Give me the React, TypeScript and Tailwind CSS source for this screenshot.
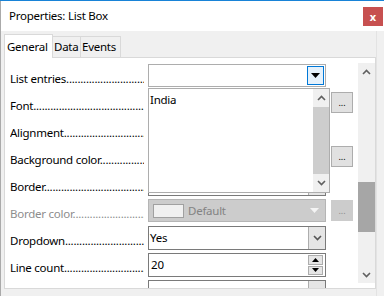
import type { ReactNode } from "react";

const font = { fontFamily: '"Noto Sans", "Open Sans", Arial, sans-serif' };

function Label({ text, disabled }: { text: string; disabled?: boolean }) {
  return (
    <div
      className={`w-[134px] overflow-hidden whitespace-nowrap pt-[7px] text-[11.5px] leading-[16px] tracking-[-0.25px] ${
        disabled ? "text-[#8d8d8d]" : "text-black"
      }`}
    >
      {text}
      {".".repeat(80)}
    </div>
  );
}

function Row({ label, disabled, children }: { label: string; disabled?: boolean; children: ReactNode }) {
  return (
    <div className="flex h-[27px] items-start pl-[5px]">
      <Label text={label} disabled={disabled} />
      <div className="ml-[4px] flex items-start gap-[5px]">{children}</div>
    </div>
  );
}

function DotsButton({ disabled }: { disabled?: boolean }) {
  return (
    <div
      className={`mt-[1px] flex h-[21px] w-[22px] items-end justify-center border pb-[5px] text-[9px] leading-none ${
        disabled ? "border-[#cccccc] bg-[#cccccc] text-[#8d8d8d]" : "border-[#adadad] bg-[#e1e1e1] text-black"
      }`}
    >
      ...
    </div>
  );
}

function Chevron({ up, color = "#444" }: { up?: boolean; color?: string }) {
  return (
    <svg width="9" height="6" viewBox="0 0 9 6">
      <path
        d={up ? "M1 5 L4.5 1.5 L8 5" : "M1 1 L4.5 4.5 L8 1"}
        fill="none"
        stroke={color}
        strokeWidth="1.6"
      />
    </svg>
  );
}

function Combo({ text, button = true }: { text?: string; button?: boolean }) {
  return (
    <div className="flex h-[24px] w-[178px] border border-[#7a7a7a] bg-white">
      <div className="flex-1 pl-[1px] pt-[3px] text-[11.5px] leading-[16px] tracking-[-0.25px] text-black">{text}</div>
      {button && (
        <div className="flex w-[17px] items-center justify-center border-l border-[#adadad] bg-[#e5e5e5]">
          <Chevron color="#555" />
        </div>
      )}
    </div>
  );
}

export default function App() {
  return (
    <div className="relative h-[296px] w-[384px] overflow-hidden bg-[#f0f0f0]" style={font}>
      <div className="h-[1px] bg-[#1883d7]" />
      {/* title bar */}
      <div className="flex h-[30px] items-center justify-between border-l border-[#aaaaaa] bg-white pl-[8px] pr-[1px]">
        <span className="text-[11.5px] tracking-[-0.25px] text-black">Properties: List Box</span>
        <div className="flex h-[19px] w-[20px] items-center justify-center bg-[#c75050] text-[11px] font-bold leading-none text-white">
          x
        </div>
      </div>

      <div className="flex h-[265px] border-l border-[#aaaaaa]">
        <div className="flex-1 pl-[3px]">
          {/* tabs */}
          <div className="flex h-[26px] items-end whitespace-nowrap text-[11.5px] tracking-[-0.25px] text-black">
            <div className="z-10 -mb-[1px] h-[24px] w-[49px] border border-b-0 border-[#d9d9d9] bg-white pl-[2px] pt-[3px]">
              General
            </div>
            <div className="h-[21px] w-[28px] border border-b-0 border-l-0 border-[#d9d9d9] bg-[#f0f0f0] pl-[1px] pt-[1px]">
              Data
            </div>
            <div className="h-[21px] w-[40px] border border-b-0 border-l-0 border-[#d9d9d9] bg-[#f0f0f0] pl-[1px] pt-[1px]">
              Events
            </div>
          </div>

          {/* panel */}
          <div className="relative flex h-[232px] w-[372px] border border-[#d9d9d9] bg-white">
            <div className="flex-1 overflow-hidden pt-[6px]">
              <Row label="List entries">
                <div className="flex h-[23px] w-[178px] border border-[#adadad] bg-white">
                  <div className="flex-1" />
                  <div className="m-[1px] flex w-[17px] items-center justify-center border border-[#0078d7] bg-[#e5f1fb]">
                    <svg width="9" height="5" viewBox="0 0 9 5">
                      <path d="M0 0 H9 L4.5 5 Z" fill="#000" />
                    </svg>
                  </div>
                </div>
              </Row>
              <Row label="Font">
                <Combo button={false} />
                <DotsButton />
              </Row>
              <Row label="Alignment">
                <Combo />
              </Row>
              <Row label="Background color">
                <Combo />
                <DotsButton />
              </Row>
              <Row label="Border">
                <Combo />
              </Row>
              <Row label="Border color" disabled>
                <div className="flex h-[23px] w-[178px] items-center border border-[#b5b5b5] bg-[#cccccc]">
                  <div className="ml-[4px] h-[14px] w-[31px] border border-[#a0a0a0] bg-[#f0f0f0]" />
                  <span className="ml-[4px] flex-1 text-[11.5px] tracking-[-0.25px] text-[#838383]">Default</span>
                  <svg width="9" height="6" viewBox="0 0 9 6" className="mr-[6px]">
                    <path d="M0 0 H9 L4.5 5 Z" fill="#f4f4f4" />
                  </svg>
                </div>
                <DotsButton disabled />
              </Row>
              <Row label="Dropdown">
                <Combo text="Yes" />
              </Row>
              <Row label="Line count">
                <div className="flex h-[24px] w-[178px] border border-[#7a7a7a] bg-white">
                  <div className="flex-1 pl-[2px] pt-[3px] text-[11.5px] leading-[16px] text-black">20</div>
                  <div className="my-[1px] mr-[2px] flex w-[15px] flex-col gap-[1px]">
                    <div className="flex flex-1 items-center justify-center border border-[#adadad] bg-[#e5e5e5]">
                      <svg width="7" height="4" viewBox="0 0 7 4">
                        <path d="M0 4 H7 L3.5 0 Z" fill="#000" />
                      </svg>
                    </div>
                    <div className="flex flex-1 items-center justify-center border border-[#adadad] bg-[#e5e5e5]">
                      <svg width="7" height="4" viewBox="0 0 7 4">
                        <path d="M0 0 H7 L3.5 4 Z" fill="#000" />
                      </svg>
                    </div>
                  </div>
                </div>
              </Row>
              <Row label="">
                <Combo />
              </Row>
            </div>

            {/* main scrollbar */}
            <div className="my-[5px] flex w-[17px] flex-col bg-[#f0f0f0]">
              <div className="flex h-[17px] items-center justify-center">
                <Chevron up color="#606060" />
              </div>
              <div className="flex-1">
                <div className="mt-[102px] h-[50px] bg-[#a6a6a6]" />
              </div>
              <div className="flex h-[17px] items-center justify-center">
                <Chevron color="#606060" />
              </div>
            </div>

            {/* list popup */}
            <div className="absolute left-[143px] top-[30px] flex h-[105px] w-[182px] border border-[#adadad] bg-white">
              <div className="flex-1 pl-[1px] pt-[3px] text-[11.5px] leading-[16px] tracking-[-0.25px] text-black">India</div>
              <div className="flex w-[16px] flex-col bg-[#f0f0f0]">
                <div className="flex h-[18px] items-center justify-center">
                  <Chevron up color="#606060" />
                </div>
                <div className="flex-1 bg-[#cdcdcd]" />
                <div className="flex h-[18px] items-center justify-center">
                  <Chevron color="#606060" />
                </div>
              </div>
            </div>
          </div>
        </div>
        <div className="w-[8px] border-l border-[#e3e3e3] bg-[#f0f0f0]" />
      </div>
    </div>
  );
}
